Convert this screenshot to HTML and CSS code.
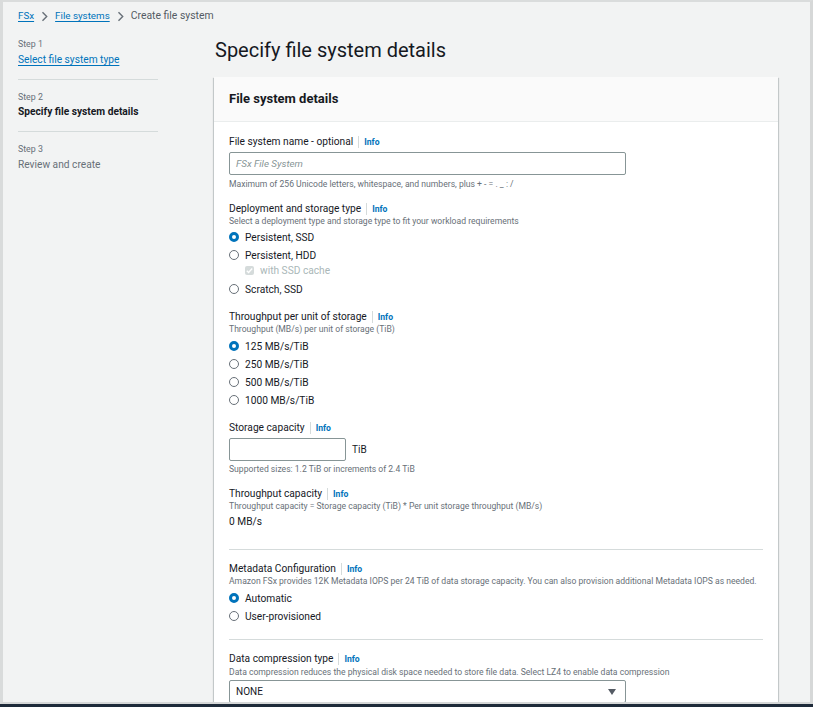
FILE: index.html
```html
<!DOCTYPE html>
<html lang="en">
<head>
<meta charset="utf-8">
<title>Create file system</title>
<link rel="stylesheet" href="styles.css">
</head>
<body>
<div class="window">
  <nav class="breadcrumb">
    <a class="crumb-link" href="#">FSx</a>
    <svg class="chev" viewBox="0 0 7 11" width="7" height="11"><path d="M1.5 1.2l4.2 4.3-4.2 4.3" fill="none" stroke="#687078" stroke-width="1.4"/></svg>
    <a class="crumb-link" href="#">File systems</a>
    <svg class="chev" viewBox="0 0 7 11" width="7" height="11"><path d="M1.5 1.2l4.2 4.3-4.2 4.3" fill="none" stroke="#687078" stroke-width="1.4"/></svg>
    <span class="crumb-current">Create file system</span>
  </nav>

  <div class="layout">
    <aside class="steps">
      <div class="step">
        <div class="step-num">Step 1</div>
        <a class="step-link" href="#">Select file system type</a>
      </div>
      <div class="step">
        <div class="step-num">Step 2</div>
        <div class="step-current">Specify file system details</div>
      </div>
      <div class="step">
        <div class="step-num">Step 3</div>
        <div class="step-disabled">Review and create</div>
      </div>
    </aside>

    <main class="main">
      <h1 class="page-title">Specify file system details</h1>
      <section class="card">
        <header class="card-header">File system details</header>
        <div class="card-body">

          <div class="field f-first">
            <div class="label-row"><span class="label">File system name - optional</span><span class="sep"></span><a class="info" href="#">Info</a></div>
            <div class="input input-wide"><span class="placeholder">FSx File System</span></div>
            <div class="hint hint-after-input">Maximum of 256 Unicode letters, whitespace, and numbers, plus + - = . _ : /</div>
          </div>

          <div class="field">
            <div class="label-row"><span class="label">Deployment and storage type</span><span class="sep"></span><a class="info" href="#">Info</a></div>
            <div class="hint">Select a deployment type and storage type to fit your workload requirements</div>
            <div class="options opts-1">
              <div class="radio-row"><span class="radio checked"></span>Persistent, SSD</div>
              <div class="radio-row"><span class="radio"></span>Persistent, HDD</div>
              <div class="check-row"><span class="checkbox"><svg viewBox="0 0 10 10" width="9" height="9"><path d="M2 5.2l2 2 4-4.4" fill="none" stroke="#fff" stroke-width="1.5"/></svg></span>with SSD cache</div>
              <div class="radio-row after-check"><span class="radio"></span>Scratch, SSD</div>
            </div>
          </div>

          <div class="field">
            <div class="label-row"><span class="label">Throughput per unit of storage</span><span class="sep"></span><a class="info" href="#">Info</a></div>
            <div class="hint">Throughput (MB/s) per unit of storage (TiB)</div>
            <div class="options">
              <div class="radio-row"><span class="radio checked"></span>125 MB/s/TiB</div>
              <div class="radio-row"><span class="radio"></span>250 MB/s/TiB</div>
              <div class="radio-row"><span class="radio"></span>500 MB/s/TiB</div>
              <div class="radio-row"><span class="radio"></span>1000 MB/s/TiB</div>
            </div>
          </div>

          <div class="field">
            <div class="label-row"><span class="label">Storage capacity</span><span class="sep"></span><a class="info" href="#">Info</a></div>
            <div class="input-unit">
              <div class="input input-small"></div>
              <span class="unit">TiB</span>
            </div>
            <div class="hint hint-after-small">Supported sizes: 1.2 TiB or increments of 2.4 TiB</div>
          </div>

          <div class="field">
            <div class="label-row"><span class="label">Throughput capacity</span><span class="sep"></span><a class="info" href="#">Info</a></div>
            <div class="hint">Throughput capacity = Storage capacity (TiB) * Per unit storage throughput (MB/s)</div>
            <div class="value">0 MB/s</div>
          </div>

          <hr class="divider div-1">

          <div class="field">
            <div class="label-row"><span class="label">Metadata Configuration</span><span class="sep"></span><a class="info" href="#">Info</a></div>
            <div class="hint">Amazon FSx provides 12K Metadata IOPS per 24 TiB of data storage capacity. You can also provision additional Metadata IOPS as needed.</div>
            <div class="options">
              <div class="radio-row"><span class="radio checked"></span>Automatic</div>
              <div class="radio-row"><span class="radio"></span>User-provisioned</div>
            </div>
          </div>

          <hr class="divider div-2">

          <div class="field">
            <div class="label-row"><span class="label">Data compression type</span><span class="sep"></span><a class="info" href="#">Info</a></div>
            <div class="hint hint-tight">Data compression reduces the physical disk space needed to store file data. Select LZ4 to enable data compression</div>
            <div class="select">
              <span>NONE</span>
              <svg class="caret" viewBox="0 0 8 6" width="8" height="6"><path d="M0 0h8L4 6z" fill="#545b64"/></svg>
            </div>
          </div>

        </div>
      </section>
    </main>
  </div>
</div>
<div class="taskbar"></div>
</body>
</html>
```
FILE: styles.css
```css
* { box-sizing: border-box; }

html, body {
  margin: 0;
  padding: 0;
  height: 707px;
  overflow: hidden;
}

body {
  font-family: Roboto, "Liberation Sans", sans-serif;
  color: #16191f;
  background: #1e2b3a;
}

a { text-decoration: none; }

.window {
  height: 704px;
  overflow: hidden;
  background: #f2f3f3;
  border-top: 2px solid #dadcdc;
  border-left: 3px solid #d9dbdb;
  border-right: 3px solid #d6d8d8;
  border-bottom: 2px solid #d6d8d8;
  padding: 7px 0 0 15px;
}

/* Breadcrumb */
.breadcrumb {
  display: flex;
  align-items: center;
  height: 14px;
  font-size: 9.8px;
  line-height: 14px;
}
.crumb-link {
  color: #0073bb;
  text-decoration: underline;
  text-underline-offset: 2px;
}
.chev { margin: 0 7px; }
.crumb-current { color: #545b64; font-size: 10.4px; }

/* Layout */
.layout {
  display: flex;
  margin-top: 14px;
}

.steps {
  width: 140px;
  flex: none;
  margin-right: 56px;
}
.step {
  padding-top: 1px;
  padding-bottom: 12px;
  border-bottom: 1px solid #d5dbdb;
  margin-bottom: 10px;
}
.step:last-child { border-bottom: none; }
.step-num {
  font-size: 8.8px;
  line-height: 12px;
  color: #687078;
}
.step-link, .step-current, .step-disabled {
  display: block;
  font-size: 10.2px;
  line-height: 14px;
}
.step-link {
  margin-top: 3px;
  color: #0073bb;
  text-decoration: underline;
  text-underline-offset: 2px;
}
.step-current { margin-top: 2px; font-weight: 700; color: #16191f; }
.step-disabled { margin-top: 3px; color: #687078; }

/* Main */
.main {
  width: 564px;
  flex: none;
}
.page-title {
  margin: 0 0 14px 1px;
  font-size: 20px;
  font-weight: 400;
  line-height: 26px;
  color: #16191f;
}

.card {
  background: #fff;
  box-shadow: 0 1px 1px 0 rgba(0, 28, 36, 0.3), 1px 1px 1px 0 rgba(0, 28, 36, 0.15), -1px 1px 1px 0 rgba(0, 28, 36, 0.15);
}
.card-header {
  height: 45px;
  display: flex;
  align-items: center;
  padding: 0 15px 1px;
  background: #fafafa;
  border-bottom: 1px solid #eaeded;
  font-size: 13px;
  font-weight: 700;
}
.card-body {
  padding: 0 15px 20px;
}

/* Fields */
.field {
  display: flex;
  flex-direction: column;
  align-items: flex-start;
  margin-top: 11px;
}
.f-first { margin-top: 12px; }

.label-row {
  display: flex;
  align-items: center;
  height: 14px;
  margin-top: 1px;
  margin-bottom: -1px;
}
.label {
  font-size: 10.2px;
  line-height: 14px;
  color: #16191f;
}
.sep {
  width: 1px;
  height: 12px;
  background: #d5dbdb;
  margin: 0 5px;
}
.info {
  font-size: 8.6px;
  font-weight: 700;
  color: #0073bb;
}

.hint {
  font-size: 8.6px;
  line-height: 12px;
  color: #687078;
  white-space: nowrap;
}
.hint-after-input { margin-top: 3px; }
.hint-after-small { margin-top: 2px; }
.hint-tight { margin-top: 1px; }

.input {
  height: 23px;
  border: 1px solid #879596;
  border-radius: 2px;
  background: #fff;
  display: flex;
  align-items: center;
  padding: 0 6px;
  margin-top: 4px;
}
.input-wide { width: 397px; }
.input-small { width: 117px; margin-top: 0; }
.placeholder {
  font-size: 9.8px;
  font-style: italic;
  color: #879596;
}

.input-unit {
  display: flex;
  align-items: center;
  margin-top: 4px;
}
.unit {
  margin-left: 6px;
  font-size: 10px;
  color: #16191f;
}

.options { margin-top: 2px; }
.opts-1 { margin-top: 1px; }

.radio-row {
  display: flex;
  align-items: center;
  height: 18px;
  font-size: 10.2px;
  color: #16191f;
}
.radio {
  width: 10px;
  height: 10px;
  border-radius: 50%;
  border: 1px solid #687078;
  background: #fff;
  margin-right: 6px;
  flex: none;
}
.radio.checked {
  border: 3px solid #0073bb;
}

.check-row {
  display: flex;
  align-items: center;
  height: 16px;
  margin-top: -2px;
  padding-left: 16px;
  font-size: 10.2px;
  color: #aab7b8;
}
.checkbox {
  width: 9px;
  height: 9px;
  border-radius: 2px;
  background: #d5dbdb;
  margin-right: 6px;
  display: flex;
  align-items: center;
  justify-content: center;
}
.after-check { margin-top: 2px; }

.value {
  margin-top: 3px;
  font-size: 10.2px;
  line-height: 14px;
}

.divider {
  border: none;
  border-top: 1px solid #d5dbdb;
  margin: 0;
  height: 0;
}
.div-1 { margin-top: 20px; }
.div-2 { margin-top: 14px; }

.select {
  width: 397px;
  height: 23px;
  margin-top: 2px;
  border: 1px solid #879596;
  border-radius: 2px;
  display: flex;
  align-items: center;
  justify-content: space-between;
  padding: 0 9px 0 6px;
  font-size: 10px;
  color: #16191f;
}

.taskbar {
  height: 3px;
  background: #1e2b3a;
}
```
